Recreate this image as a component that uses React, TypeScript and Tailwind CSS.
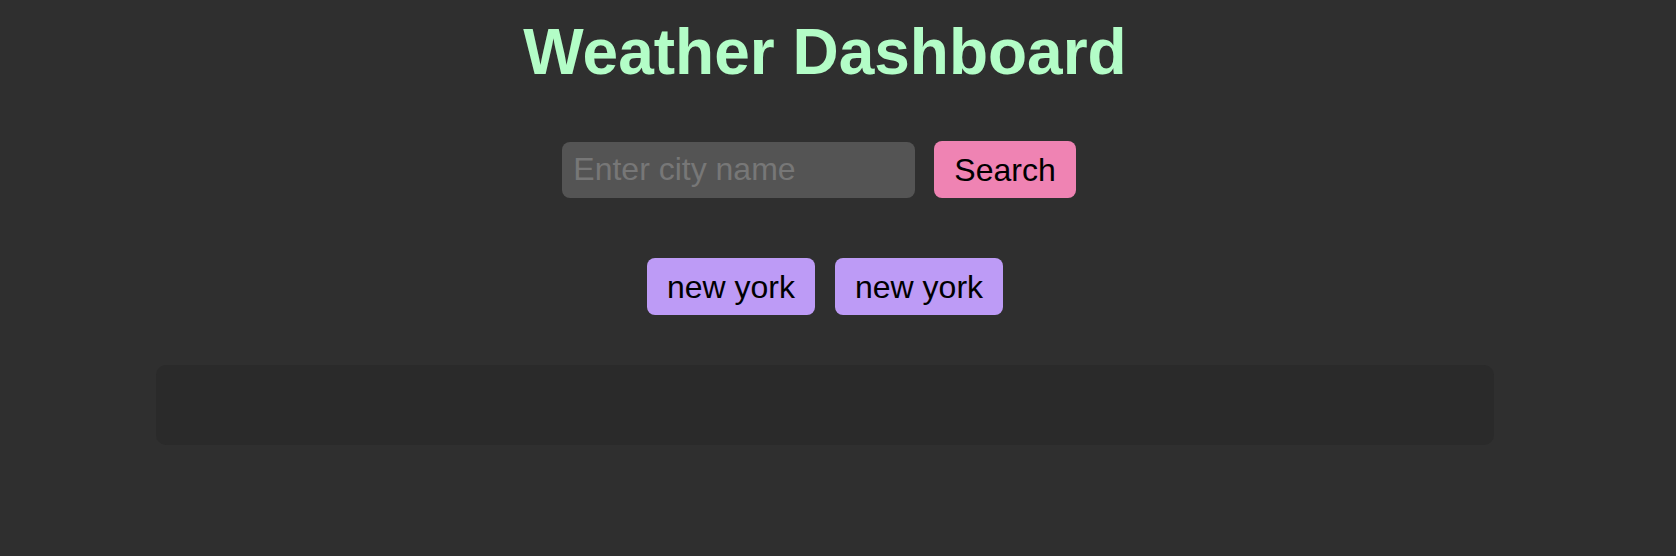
const cities = ["new york", "new york"];

export default function App() {
  return (
    <div
      className="min-h-[556px] w-full bg-[#2f2f2f]"
      style={{ fontFamily: '"Liberation Sans", Arial, sans-serif' }}
    >
      <div className="flex w-[1650px] flex-col items-center">
        <h1 className="mt-[15px] text-[64px] font-bold leading-[74px] text-[#b3fdc7]">
          Weather Dashboard
        </h1>

        <div className="mt-[52px] mr-[12px] flex items-center gap-[19px]">
          <input
            type="text"
            placeholder="Enter city name"
            className="h-[56px] w-[353px] rounded-[8px] bg-[#545454] px-[11px] text-[32px] text-white outline-none placeholder:text-[#777777]"
          />
          <button className="h-[57px] rounded-[8px] bg-[#ef83b3] px-[20px] text-[32px] text-black">
            Search
          </button>
        </div>

        <div className="mt-[60px] flex gap-[20px]">
          {cities.map((city, i) => (
            <button
              key={i}
              className="h-[57px] rounded-[8px] bg-[#bd9bf6] px-[20px] text-[32px] text-black"
            >
              {city}
            </button>
          ))}
        </div>

        <div className="mt-[50px] h-[80px] w-[1338px] rounded-[10px] bg-[#2a2a2a]" />
      </div>
    </div>
  );
}
